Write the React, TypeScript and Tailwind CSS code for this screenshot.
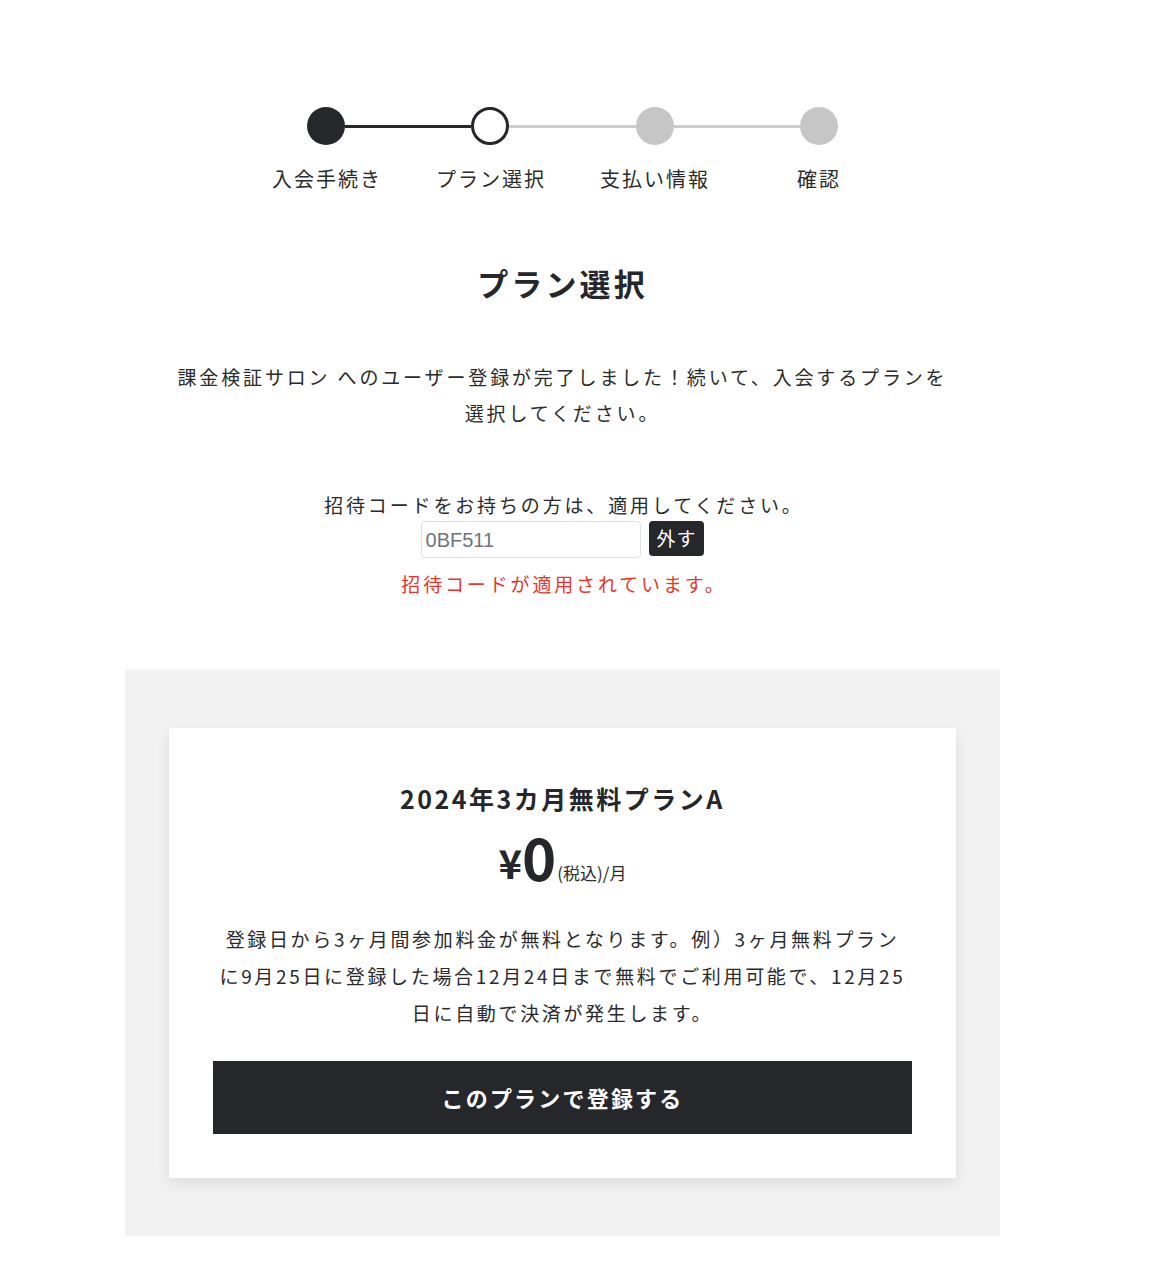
import React from "react";

const font = { fontFamily: '"Noto Sans CJK JP", "Noto Sans", sans-serif' };

const steps = [
  { label: "入会手続き", state: "done" },
  { label: "プラン選択", state: "current" },
  { label: "支払い情報", state: "todo" },
  { label: "確認", state: "todo" },
];

function Dot({ state }: { state: string }) {
  if (state === "done") return <div className="h-[38px] w-[38px] shrink-0 rounded-full bg-[#26272b]" />;
  if (state === "current")
    return <div className="h-[38px] w-[38px] shrink-0 rounded-full border-[3px] border-[#26272b] bg-white" />;
  return <div className="h-[38px] w-[38px] shrink-0 rounded-full bg-[#c6c6c6]" />;
}

function Stepper() {
  return (
    <div className="ml-[119px] w-[656px]">
      <div className="ml-[63px] flex w-[531px] items-center">
        <Dot state="done" />
        <div className="h-[3px] flex-1 bg-[#26272b]" />
        <Dot state="current" />
        <div className="h-[3px] flex-1 bg-[#cccccc]" />
        <Dot state="todo" />
        <div className="h-[3px] flex-1 bg-[#cccccc]" />
        <Dot state="todo" />
      </div>
      <div className="mt-[20px] flex">
        {steps.map((s) => (
          <div key={s.label} className="w-[164px] pl-[0.1em] text-center text-[20px] leading-[28px] tracking-[0.1em] text-[#2b2b2b]">
            {s.label}
          </div>
        ))}
      </div>
    </div>
  );
}

export default function App() {
  return (
    <div className="min-h-[1280px] bg-white text-[#2b2b2b]" style={font}>
      <div className="ml-[125px] w-[875px] pt-[107px]">
        <Stepper />

        <h1 className="mt-[70px] text-center text-[31px] font-bold leading-[40px] tracking-[0.1em] text-[#26272b]">
          プラン選択
        </h1>

        <p className="mx-auto mt-[56px] w-[775px] text-center text-[19px] leading-[36px] tracking-[0.15em] text-[#2b2b2b]">
          課金検証サロン へのユーザー登録が完了しました！続いて、入会するプランを選択してください。
        </p>

        <div className="mt-[59px] flex flex-col items-center">
          <p className="pl-[0.15em] text-[19px] leading-[30px] tracking-[0.15em] text-[#2b2b2b]">
            招待コードをお持ちの方は、適用してください。
          </p>
          <div className="mt-[1px] flex items-start gap-[8px]">
            <div
              className="flex h-[37px] w-[220px] items-center rounded-[4px] border border-[#dfe3e7] bg-white px-[4px] text-[20px] text-[#6c757d]"
              style={{ fontFamily: '"Liberation Sans", Arial, sans-serif' }}
            >
              0BF511
            </div>
            <button className="flex h-[35px] items-center rounded-[4px] bg-[#26272b] px-[8px] text-[19px] tracking-[0.05em] text-white">
              外す
            </button>
          </div>
          <p className="mt-[11px] pl-[0.15em] text-[19px] leading-[30px] tracking-[0.15em] text-[#e8362a]">
            招待コードが適用されています。
          </p>
        </div>

        <div className="mt-[70px] bg-[#f2f2f2] px-[44px] pb-[58px] pt-[59px]">
          <div className="bg-white px-[44px] pb-[44px] pt-[52px] shadow-[0_5px_14px_rgba(0,0,0,0.09)]">
            <h2 className="text-center text-[25px] font-bold leading-[36px] tracking-[0.1em] text-[#26272b]">
              2024年3カ月無料プランA
            </h2>
            <div className="mt-[12px] flex items-end justify-center text-[#26272b]">
              <span className="text-[40px] font-bold leading-[44px]">¥</span>
              <span className="text-[58px] font-bold leading-[56px]">0</span>
              <span className="mb-[1px] ml-[1px] text-[17px] leading-[20px] text-[#2b2b2b]">(税込)/月</span>
            </div>
            <p className="mt-[36px] text-center text-[19px] leading-[37px] tracking-[0.14em] text-[#2b2b2b]">
              登録日から3ヶ月間参加料金が無料となります。例）3ヶ月無料プラン
              <br />
              に9月25日に登録した場合12月24日まで無料でご利用可能で、12月25
              <br />
              日に自動で決済が発生します。
            </p>
            <button className="mt-[30px] flex h-[73px] w-full items-center justify-center bg-[#26272b] text-[22px] font-bold tracking-[0.1em] text-white">
              このプランで登録する
            </button>
          </div>
        </div>
      </div>
    </div>
  );
}
